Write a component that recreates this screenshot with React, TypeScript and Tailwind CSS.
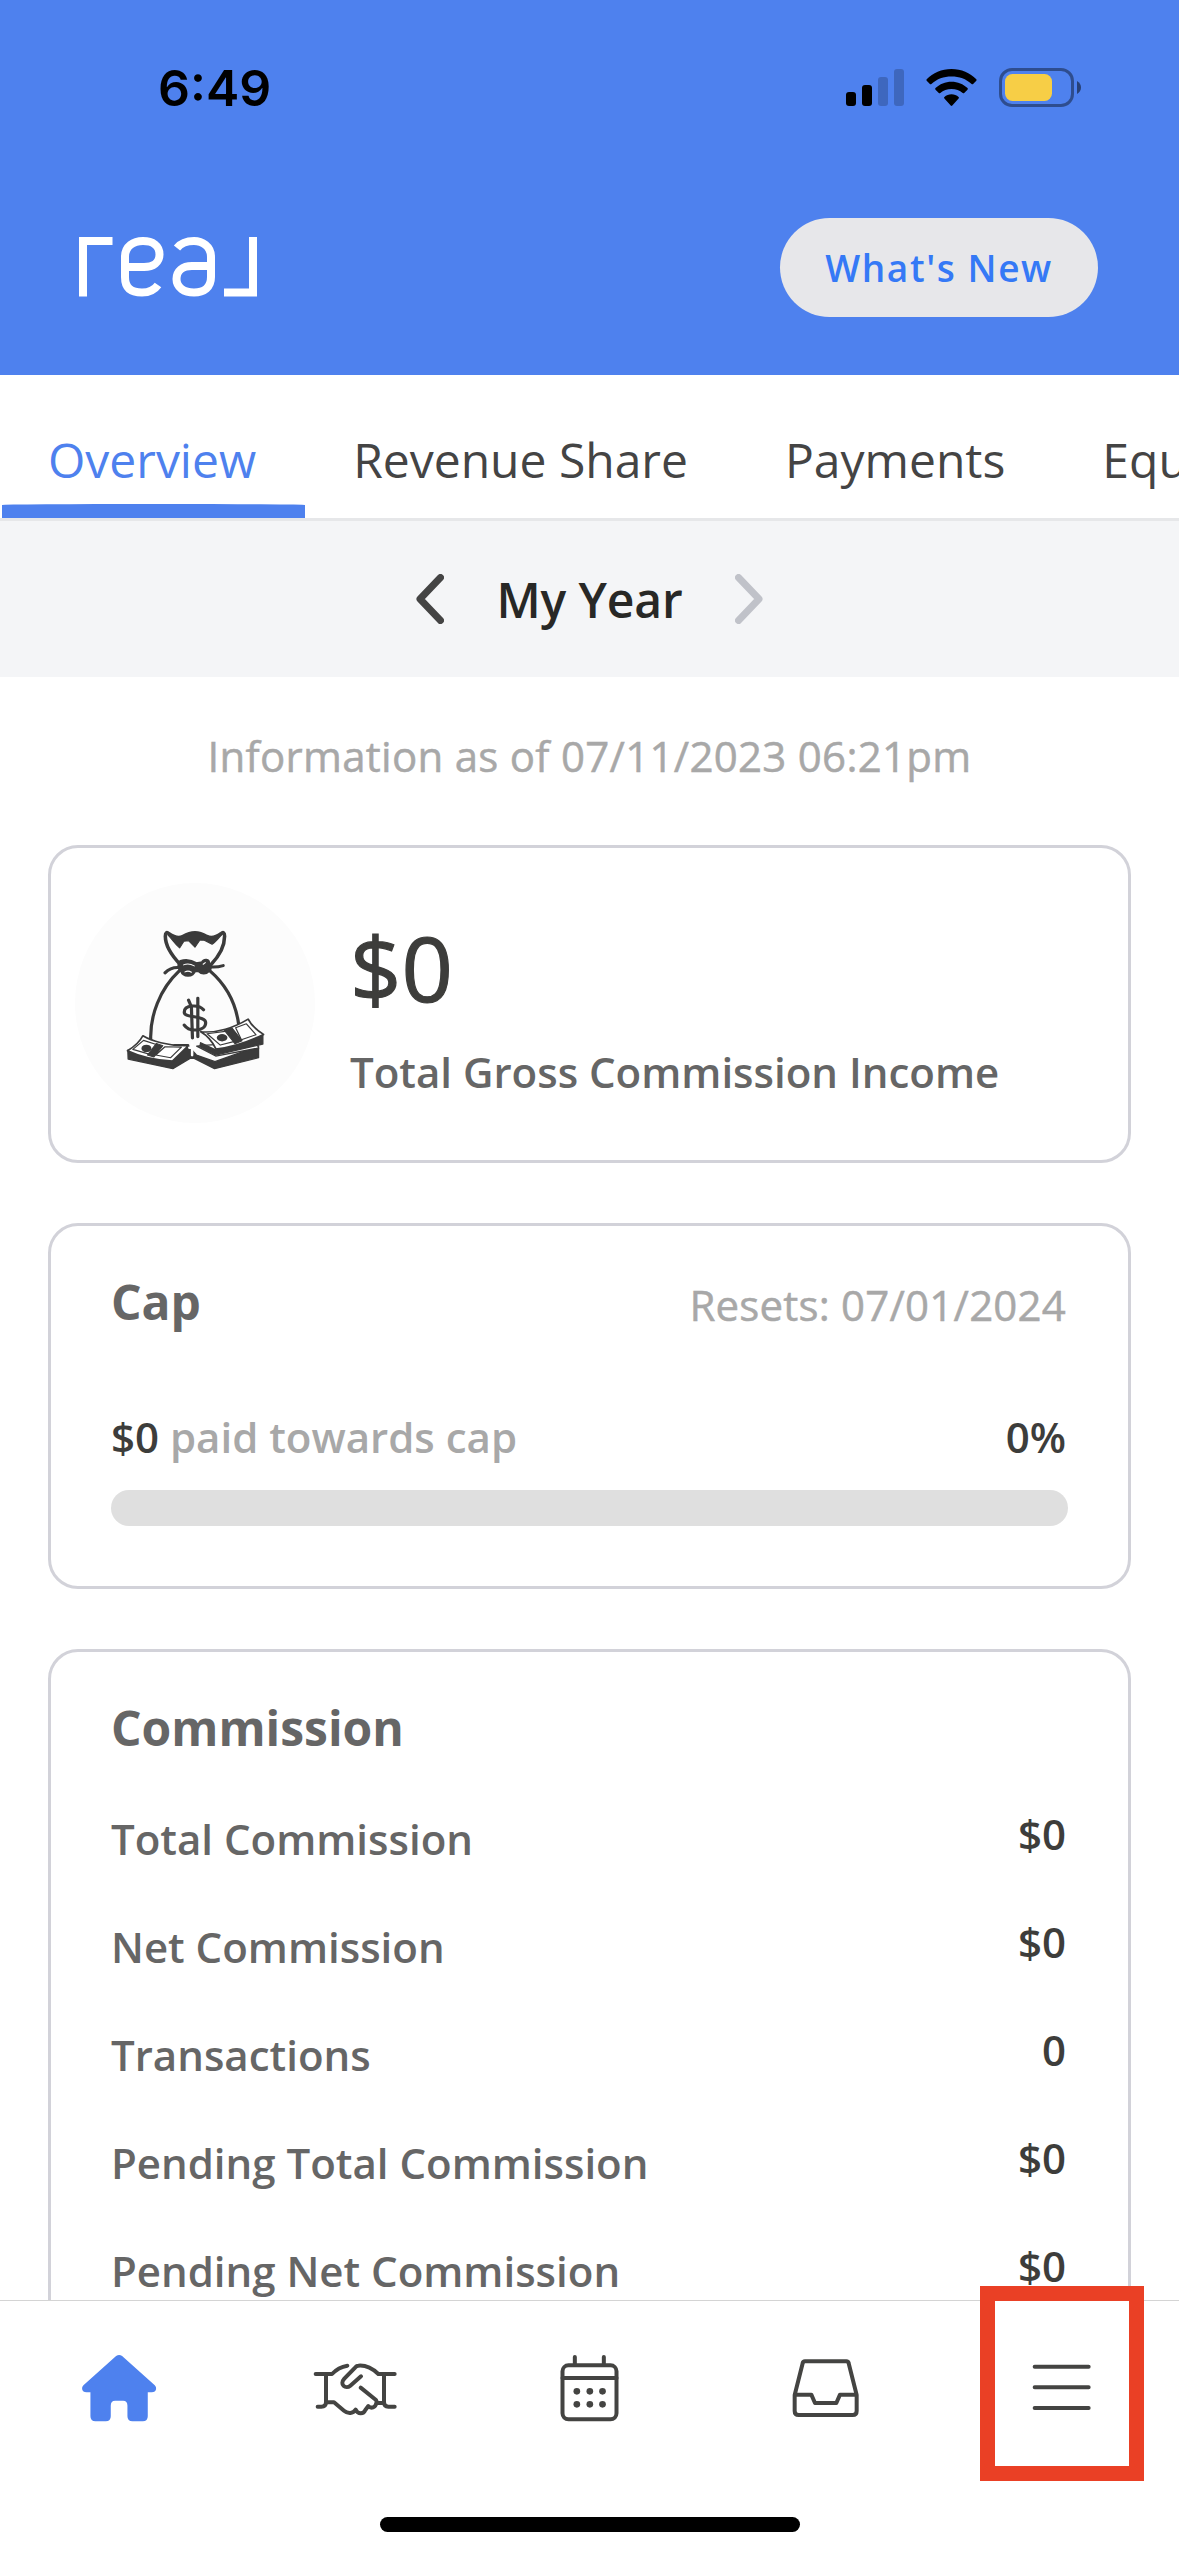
import type { ReactNode } from 'react';

const tabs = ['Overview', 'Revenue Share', 'Payments', 'Equity'];

const commissionRows = [
  { label: 'Total Commission', value: '$0' },
  { label: 'Net Commission', value: '$0' },
  { label: 'Transactions', value: '0' },
  { label: 'Pending Total Commission', value: '$0' },
  { label: 'Pending Net Commission', value: '$0' },
];

function SignalIcon() {
  return (
    <svg width="58" height="39" viewBox="0 0 58 39">
      <rect x="0" y="24" width="10" height="14" rx="3" />
      <rect x="16" y="17" width="10" height="21" rx="3" />
      <rect x="32" y="9" width="10" height="29" rx="3" opacity="0.2" />
      <rect x="48" y="1" width="10" height="37" rx="3" opacity="0.2" />
    </svg>
  );
}

function WifiIcon() {
  return (
    <svg width="51" height="39" viewBox="0 0 51 39">
      <path d="M25.5 1C35.5 1 44 5 50.3 11.2q.7.8 0 1.6l-3.2 3.2q-.7.7-1.5 0C40 11 33.3 8.6 25.5 8.6S11 11 5.4 16q-.8.7-1.5 0L.7 12.8q-.7-.8 0-1.6C7 5 15.5 1 25.5 1Z" />
      <path d="M25.5 13.7c6.3 0 11.7 2.4 16 6.4q.7.8 0 1.6l-3.3 3.3q-.7.7-1.5 0c-3-2.700-6.800-4.100-11.200-4.100s-8.200 1.400-11.200 4.100q-.8.7-1.500 0l-3.300-3.300q-.7-.8 0-1.600c4.300-4 9.700-6.400 16-6.400Z" />
      <path d="M25.5 26.2c2.7 0 5.2 1 7.1 2.7q.8.8 0 1.6l-6.3 7q-.8.8-1.6 0l-6.3-7q-.8-.8 0-1.6c1.9-1.7 4.4-2.7 7.1-2.7Z" />
    </svg>
  );
}

function BatteryIcon() {
  return (
    <svg width="82" height="39" viewBox="0 0 82 39">
      <rect x="1.5" y="1.5" width="72" height="36" rx="11.5" fill="none" stroke="#000" strokeWidth="3" opacity="0.4" />
      <rect x="6" y="6" width="47" height="27" rx="7.5" fill="#f7ce46" />
      <path d="M78 13c2.500 1.500 4 3.500 4 6.500s-1.500 5-4 6.500Z" opacity="0.5" />
    </svg>
  );
}

function Logo() {
  return (
    <svg width="178" height="60" viewBox="0 0 178 60" fill="none" stroke="#fff" strokeWidth="8" role="img" aria-label="real" className="mb-[2px]">
      <path d="M4 59.500V4h29.500" />
      <path d="M46 30h19c9.500 0 15.500-5 15.500-12.500C80.500 8.500 73.500 4 64 4S46 9 46 20v20c0 11 6 15.500 17 15.500 8 0 12.500-2.500 16-7.500" />
      <path d="M147 11c4-5 9-7 17-7s17 5 17 16v20c0 10.500-7 15.500-17 15.500s-17.500-5-17.500-13.500c0-8 6-13 15.500-13h19" transform="translate(-49)" />
      <path d="M145 55.500h29V0" />
    </svg>
  );
}

function Chevron({ className, d }: { className: string; d: string }) {
  return (
    <svg width="28" height="50" viewBox="0 0 28 50" fill="none" strokeWidth="7" strokeLinecap="round" strokeLinejoin="round" className={className}>
      <path d={d} />
    </svg>
  );
}

function MoneyBag() {
  return (
    <svg
      width="141"
      height="143"
      viewBox="240 295 395 430"
      preserveAspectRatio="none"
      fill="none"
      stroke="#3b3b3b"
      strokeWidth="10"
      strokeLinecap="round"
      strokeLinejoin="round"
      className="mb-[7px]"
    >
      {/* neck */}
      <path d="M395 405c-25-28-42-57-42-85 0-12 4-14 10-8 14 10 27 15 39 8 15-9 20-11 34-11s20 3 33 11c13 7 27 2 40-8 6-6 10-4 10 8 0 28-14 58-38 85" />
      <path d="M360 316c13 14 20 27 33 39l12-20 13-2 18 20 14-22 12 1 22 12c11-7 18-19 28-30-18 10-30 16-43 10-12-7-20-15-33-15s-20 9-34 15c-14 5-28 0-42-8Z" fill="#3b3b3b" strokeWidth="3" />
      {/* body */}
      <path d="M392 424c-55 55-82 135-80 206M478 424c45 42 72 97 80 158M380 648h36" strokeWidth="9" />
      {/* knot */}
      <path d="M396 396c14-5 31-2 44 7l17-3c4-11 20-10 16 2 8 6 8 15 0 22-7 8-18 8-26-1l-12-1c-6 20-31 19-36 2-8-7-10-17-3-28Z" fill="#3b3b3b" strokeWidth="10" />
      <path d="M352 430c14-15 28-18 45-15M478 412c14 1 25 0 37-4" strokeWidth="9" />
      <path d="M404 406c12-5 20-3 30 3M408 427c7-4 12-3 18 1M459 404l6-5" stroke="#fff" strokeWidth="3" />
      {/* dollar mark */}
      <path d="M418 512l8 20 3 94M444 506v116" strokeWidth="9" />
      <path d="M460 541c-14-17-54-15-54 7 0 20 60 8 60 32 0 26-46 29-60 7" strokeWidth="9" />
      {/* left bundle */}
      <path d="M248 662l128 32 40-45 24 28 52 20 122-47v35L491 718l-57-31h-12l-48 31-125-29Z" fill="#3b3b3b" strokeWidth="4" />
      <path d="M290 619c22 14 70 32 127 30l-44 46c-45-2-90-13-126-31 20-13 35-28 43-45Z" fill="#fff" strokeWidth="5" />
      <path d="M292 633l40 14-22 28-48-15ZM352 652l46 1-30 32-42-8Z" strokeWidth="3.500" />
      <path d="M328 642l18 7-25 34-18-6Z" fill="#3b3b3b" strokeWidth="3" />
      <ellipse cx="300" cy="657" rx="9" ry="6" fill="#3b3b3b" />
      {/* right bundles */}
      <path d="M441 650l53 30 120-24-5-18-150 10Z" fill="#fff" strokeWidth="4" />
      <path d="M452 640l43 22 131-45v27l-132 33-44-25Z" fill="#3b3b3b" strokeWidth="4" />
      <path d="M452 607c45 5 95-13 133-38 8 18 24 33 43 46-42 22-86 38-133 44-10-22-23-40-43-52Z" fill="#fff" strokeWidth="5" />
      <path d="M470 613l56-8 24 30-43 12ZM550 595l30-12 27 33-41 15Z" strokeWidth="3.500" />
      <path d="M518 602l22-6 28 38-20 9Z" fill="#3b3b3b" strokeWidth="3" />
      <ellipse cx="512" cy="625" rx="10" ry="6" fill="#3b3b3b" />
      <path d="M428 640v38M420 655h16" stroke="#fff" strokeWidth="7" />
    </svg>
  );
}

function NavIcon({ viewBox, children }: { viewBox: string; children: ReactNode }) {
  return (
    <svg width="90" height="80" viewBox={viewBox} fill="none" stroke="#444442" strokeWidth="12" strokeLinecap="round" strokeLinejoin="round">
      {children}
    </svg>
  );
}

function BottomNav() {
  return (
    <nav className="h-[256px] shrink-0 border-t border-[#d4d4d4] bg-white">
      <div className="grid h-[174px] grid-cols-5 place-items-center">
        <NavIcon viewBox="98.700 204 270 240">
          <path
            d="M228 228q9-6 18 0l98 88q5 5 4 11-2 10-13 10h-12v72q0 15-15 15h-31q-15 0-15-15v-32q0-15-13-15h-24q-13 0-13 15v32q0 15-15 15h-31q-15 0-15-15v-72h-12q-11 0-13-10-1-6 4-11Z"
            fill="#4e81ee"
            stroke="none"
          />
        </NavIcon>
        <NavIcon viewBox="806 204 270 240">
          <path d="M826 282h49c13-14 28-22 46-25M857 283v83q0 14-14 14h-11" />
          <path d="M1063 282h-49c-18-17-39-27-60-25q-5 0-9 5l-33 34c-16 18 4 33 18 21l32-28" />
          <path d="M1031 283v84q0 13 13 13h19" />
          <path d="M857 367h24l30 25c12 10 27 9 35-3 7 14 23 15 29 1l9-12c8 9 22 5 24-9h22M961 323l46 37q3 4 1 9" />
        </NavIcon>
        <NavIcon viewBox="133.500 204 270 240">
          <rect x="189" y="256" width="162" height="162" rx="18" />
          <path d="M189 294h162M226 231v22M313 231v22" />
          <g fill="#444442" stroke="none">
            <circle cx="232" cy="334" r="10" />
            <circle cx="271" cy="334" r="10" />
            <circle cx="309" cy="334" r="10" />
            <circle cx="232" cy="373" r="10" />
            <circle cx="271" cy="373" r="10" />
            <circle cx="309" cy="373" r="10" />
          </g>
        </NavIcon>
        <NavIcon viewBox="841 204 270 240">
          <path d="M885 345l24-95q1-6 7-6h124q6 0 7 6l24 95v48q0 12-12 12H897q-12 0-12-12ZM885 344h50l11 25h64l11-25h50" />
        </NavIcon>
        <div className="relative">
          <NavIcon viewBox="0 0 270 240">
            <path d="M56 56h162M56 118h162M56 180h162" />
          </NavIcon>
          <div className="absolute top-[-62px] left-[-36px] h-[195px] w-[164px] border-[15px] border-[#ea4025]" />
        </div>
      </div>
      <div className="mx-auto mt-[42px] h-[15px] w-[420px] rounded-full bg-black" />
    </nav>
  );
}

function Card({ className, children }: { className: string; children: ReactNode }) {
  return <section className={`mx-[48px] rounded-[30px] border-[3px] border-[#d2d2d9] ${className}`}>{children}</section>;
}

export default function App() {
  return (
    <div className="flex h-[2556px] w-[1179px] flex-col overflow-hidden bg-white font-['Open_Sans',sans-serif] text-[42px] leading-[56px]">
      <header className="h-[375px] shrink-0 bg-[#4e81ee]">
        <div className="flex h-[160px] items-start justify-between pr-[98px] pl-[158px]">
          <span className="pt-[58px] font-['Inter',sans-serif] text-[50px] leading-[60px] font-semibold text-black">6:49</span>
          <div className="flex gap-[22px] pt-[68px]">
            <SignalIcon />
            <WifiIcon />
            <BatteryIcon />
          </div>
        </div>
        <div className="flex h-[215px] items-center justify-between pr-[81px] pl-[79px]">
          <Logo />
          <button className="h-[99px] w-[318px] rounded-full bg-[#e7e7ea] text-[37px] font-semibold tracking-[1.600px] text-[#3579f6]">
            What's New
          </button>
        </div>
      </header>

      <div className="flex h-[146px] shrink-0 overflow-hidden border-b-[3px] border-[#e6e7e9] text-[48px] leading-[60px] text-[#444]">
        {tabs.map((tab, i) => (
          <div key={tab} className={i === 0 ? 'flex shrink-0 flex-col justify-between pt-[55px] text-[#4e81ee]' : 'shrink-0 pt-[55px]'}>
            <span className="pr-[49px] pl-[48px]">{tab}</span>
            {i === 0 && <div className="ml-[2px] h-[14px] rounded-t-[100%_2px] bg-[#4e81ee]" />}
          </div>
        ))}
      </div>

      <div className="flex h-[156px] shrink-0 items-center justify-center gap-[53px] bg-[#f4f5f7] text-[48px] leading-[60px] font-semibold text-[#282826]">
        <Chevron className="stroke-[#444]" d="M24.500 3.500 4 25l20.500 21.500" />
        <span className="pt-[2px] tracking-[-0.150px]">My Year</span>
        <Chevron className="stroke-[#c0c2c9]" d="M3.500 3.500 24 25 3.500 46.500" />
      </div>

      <main className="min-h-0 flex-1 overflow-hidden">
        <p className="pt-[51px] text-center tracking-[0.280px] text-[#a8a8a8] [-webkit-text-stroke:0.5px]">Information as of 07/11/2023 06:21pm</p>

        <Card className="mt-[61px] flex h-[318px] gap-[35px] pl-[24px]">
          <div className="mt-[35px] flex size-[240px] items-center justify-center rounded-full bg-[#fcfcfc]">
            <MoneyBag />
          </div>
          <div className="pt-[64px]">
            <div className="text-[90px] leading-[110px] font-medium text-[#3d3d3b] [-webkit-text-stroke:1.2px]">$0</div>
            <div className="mt-[22px] font-semibold text-[#666]">Total Gross Commission Income</div>
          </div>
        </Card>

        <Card className="mt-[60px] h-[366px] px-[60px] pt-[46px]">
          <div className="flex justify-between leading-[60px]">
            <h2 className="text-[48px] font-bold text-[#666]">Cap</h2>
            <span className="pt-[3px] pr-[2px] tracking-[0.200px] text-[#a8a8a8] [-webkit-text-stroke:0.5px]">Resets: 07/01/2024</span>
          </div>
          <div className="mt-[74px] flex justify-between pr-[2px] font-semibold text-[#3d3d3b]">
            <span>
              $0 <span className="text-[#a8a8a8]">paid towards cap</span>
            </span>
            <span>0%</span>
          </div>
          <div className="mt-[25px] h-[36px] rounded-full bg-[#dfdfdf]" />
        </Card>

        <Card className="mt-[60px] h-[760px] px-[60px] pt-[46px]">
          <h2 className="text-[48px] leading-[60px] font-bold text-[#666]">Commission</h2>
          <div className="mt-[53px] flex flex-col gap-[52px] font-semibold">
            {commissionRows.map((row) => (
              <div key={row.label} className="flex h-[56px] justify-between pr-[2px]">
                <span className="text-[#666]">{row.label}</span>
                <span className="-mt-[5px] text-[#3d3d3b]">{row.value}</span>
              </div>
            ))}
          </div>
        </Card>
      </main>

      <BottomNav />
    </div>
  );
}
